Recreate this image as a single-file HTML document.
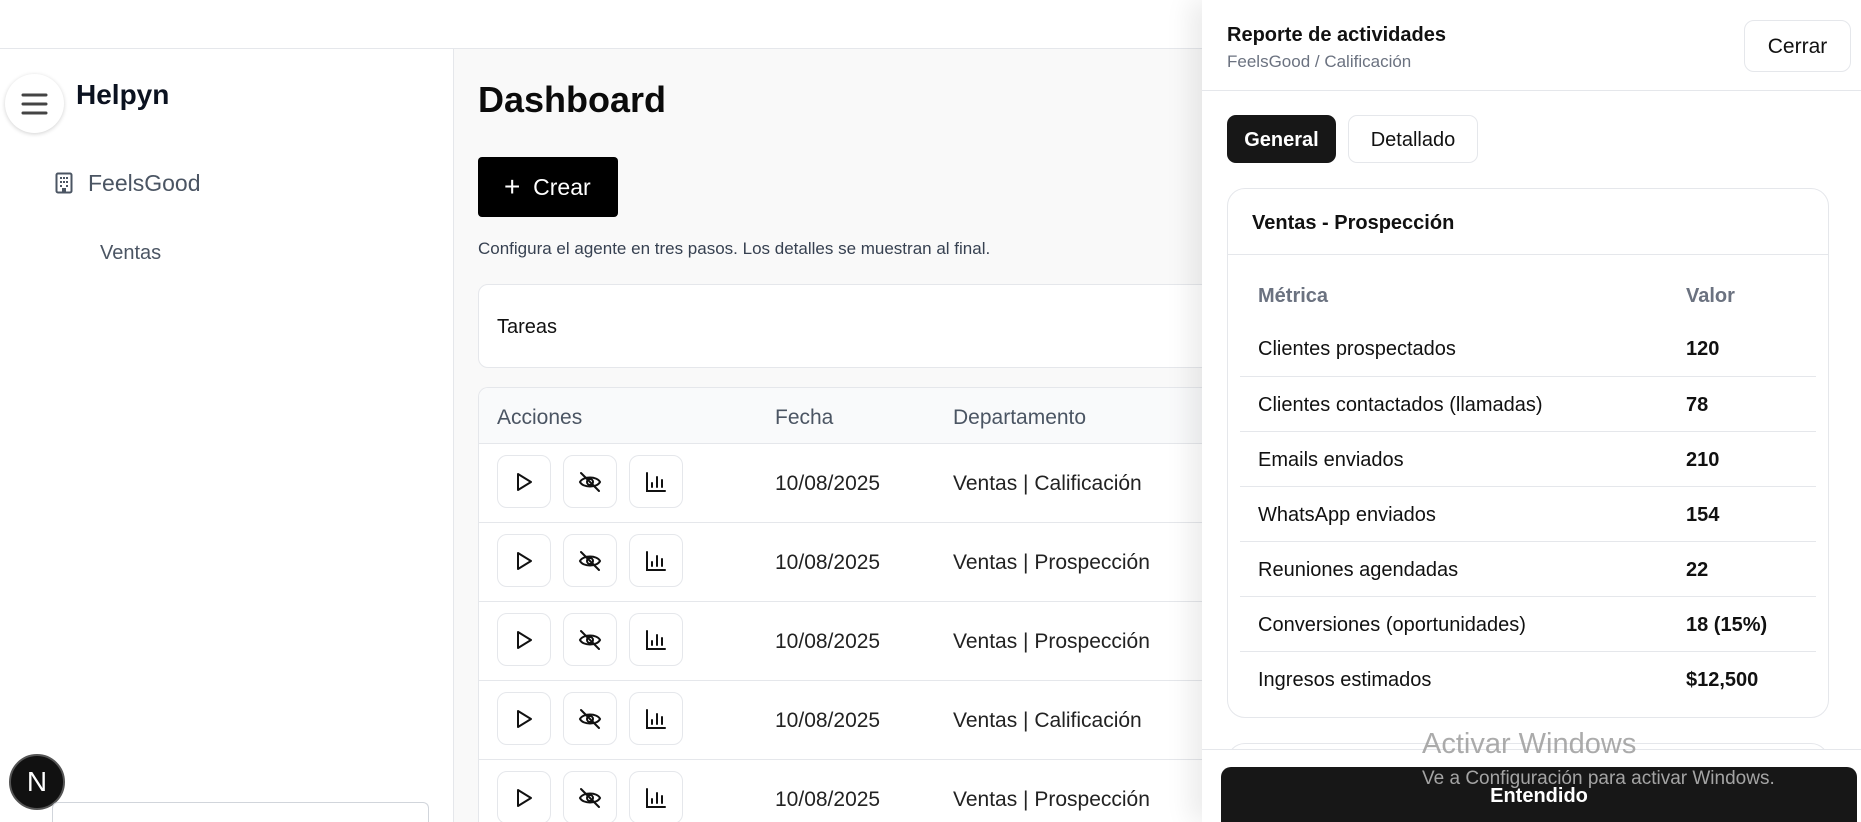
<!DOCTYPE html>
<html style="overflow:hidden;height:822px"><head><meta charset="utf-8"><style>
*{box-sizing:border-box;margin:0;padding:0}
body{width:1861px;height:822px;overflow:hidden;position:relative;background:#fff;font-family:"Liberation Sans",sans-serif;color:#111}
.abs{position:absolute}
.topbar{left:0;top:0;width:1861px;height:49px;border-bottom:1px solid #e5e7eb;background:#fff}
.side{left:0;top:49px;width:454px;height:773px;background:#fff;border-right:1px solid #e5e7eb}
.main{left:454px;top:49px;width:1407px;height:773px;background:#f9f9f9}
.ib{width:54px;height:53px;border:1px solid #e5e7eb;border-radius:10px;background:#fff;display:flex;align-items:center;justify-content:center}
.row{left:479px;width:800px;height:79px;border-top:1px solid #e5e7eb;background:#fff}
.mr{position:absolute;left:1240px;width:576px;height:55px;font-size:20px;color:#111}
.mr span{position:absolute;top:0;line-height:57px}
.t{font-size:21px;color:#222}
</style></head><body>
<div class="abs topbar"></div>
<div class="abs side"></div>
<div class="abs main"></div>

<div class="abs" style="left:5px;top:74px;width:59px;height:59px;border-radius:50%;background:#fff;box-shadow:0 1px 4px rgba(0,0,0,.18)"></div>
<svg class="abs" style="left:21px;top:92px" width="27" height="24"><g stroke="#444" stroke-width="3" stroke-linecap="round"><path d="M2 3H25M2 12H25M2 21H25"/></g></svg>
<div class="abs" style="left:76px;top:79px;font-size:28px;font-weight:bold;color:#0b1220">Helpyn</div>
<svg class="abs" style="left:55px;top:172px" width="18" height="22" viewBox="0 0 18 22"><rect x="1.5" y="1.5" width="15" height="19" rx="1.5" fill="none" stroke="#4b5563" stroke-width="2"/><g fill="#4b5563"><rect x="5" y="5" width="2" height="2"/><rect x="8" y="5" width="2" height="2"/><rect x="11" y="5" width="2" height="2"/><rect x="5" y="9" width="2" height="2"/><rect x="8" y="9" width="2" height="2"/><rect x="11" y="9" width="2" height="2"/><rect x="5" y="13" width="2" height="2"/><rect x="11" y="13" width="2" height="2"/><rect x="7" y="16" width="4" height="5"/></g></svg>
<div class="abs" style="left:88px;top:170px;font-size:23px;color:#4b5563">FeelsGood</div>
<div class="abs" style="left:100px;top:242px;font-size:20px;color:#4b5563">Ventas</div>
<div class="abs" style="left:9px;top:754px;width:56px;height:56px;border-radius:50%;background:#111;border:2px solid #555;color:#fff;font-size:28px;text-align:center;line-height:52px">N</div>
<div class="abs" style="left:52px;top:802px;width:377px;height:20px;border:1px solid #d1d5db;border-bottom:none;border-radius:6px 6px 0 0;background:#fff"></div>

<div class="abs" style="left:478px;top:79px;font-size:36px;font-weight:bold;color:#0b0b0b">Dashboard</div>
<div class="abs" style="left:478px;top:157px;width:140px;height:60px;background:#000;border-radius:4px;color:#fff;font-size:23px;line-height:60px;padding-left:26px"><span style="font-size:28px;vertical-align:-1px">+</span>&nbsp; Crear</div>
<div class="abs" style="left:478px;top:239px;font-size:17px;color:#374151">Configura el agente en tres pasos. Los detalles se muestran al final.</div>
<div class="abs" style="left:478px;top:284px;width:900px;height:84px;background:#fff;border:1px solid #e5e7eb;border-radius:10px"></div>
<div class="abs" style="left:497px;top:316px;font-size:20px;color:#111">Tareas</div>
<div class="abs" style="left:478px;top:387px;width:900px;height:435px;background:#fff;border:1px solid #e5e7eb;border-bottom:none;border-radius:10px 10px 0 0;overflow:hidden">
<div style="height:56px;background:#f9fafb"></div></div>
<div class="abs" style="left:497px;top:406px;font-size:21px;color:#4b5563">Acciones</div>
<div class="abs" style="left:775px;top:406px;font-size:21px;color:#4b5563">Fecha</div>
<div class="abs" style="left:953px;top:406px;font-size:21px;color:#4b5563">Departamento</div>

<div class="abs row" style="top:443px"></div><div class="abs row" style="top:522px"></div><div class="abs row" style="top:601px"></div><div class="abs row" style="top:680px"></div><div class="abs row" style="top:759px;height:63px"></div>

<div class="abs" style="left:497px;top:455px"><div style="display:flex;gap:12px"><div class="ib"><svg width="24" height="24" viewBox="0 0 24 24" fill="none" stroke="#111" stroke-width="2" stroke-linejoin="round"><path d="M6 4L19 12L6 20Z"/></svg></div><div class="ib"><svg width="24" height="24" viewBox="0 0 24 24" fill="none" stroke="#111" stroke-width="2" stroke-linecap="round"><path d="M2 12C5 6 19 6 22 12C19 18 5 18 2 12Z"/><circle cx="12" cy="12" r="3"/><path d="M3 3L21 21"/></svg></div><div class="ib"><svg width="24" height="24" viewBox="0 0 24 24" fill="none" stroke="#111" stroke-width="2" stroke-linecap="round"><path d="M3 3V21H21M8 17V13M13 17V7M18 17V10"/></svg></div></div></div>
<div class="abs" style="left:497px;top:534px"><div style="display:flex;gap:12px"><div class="ib"><svg width="24" height="24" viewBox="0 0 24 24" fill="none" stroke="#111" stroke-width="2" stroke-linejoin="round"><path d="M6 4L19 12L6 20Z"/></svg></div><div class="ib"><svg width="24" height="24" viewBox="0 0 24 24" fill="none" stroke="#111" stroke-width="2" stroke-linecap="round"><path d="M2 12C5 6 19 6 22 12C19 18 5 18 2 12Z"/><circle cx="12" cy="12" r="3"/><path d="M3 3L21 21"/></svg></div><div class="ib"><svg width="24" height="24" viewBox="0 0 24 24" fill="none" stroke="#111" stroke-width="2" stroke-linecap="round"><path d="M3 3V21H21M8 17V13M13 17V7M18 17V10"/></svg></div></div></div>
<div class="abs" style="left:497px;top:613px"><div style="display:flex;gap:12px"><div class="ib"><svg width="24" height="24" viewBox="0 0 24 24" fill="none" stroke="#111" stroke-width="2" stroke-linejoin="round"><path d="M6 4L19 12L6 20Z"/></svg></div><div class="ib"><svg width="24" height="24" viewBox="0 0 24 24" fill="none" stroke="#111" stroke-width="2" stroke-linecap="round"><path d="M2 12C5 6 19 6 22 12C19 18 5 18 2 12Z"/><circle cx="12" cy="12" r="3"/><path d="M3 3L21 21"/></svg></div><div class="ib"><svg width="24" height="24" viewBox="0 0 24 24" fill="none" stroke="#111" stroke-width="2" stroke-linecap="round"><path d="M3 3V21H21M8 17V13M13 17V7M18 17V10"/></svg></div></div></div>
<div class="abs" style="left:497px;top:692px"><div style="display:flex;gap:12px"><div class="ib"><svg width="24" height="24" viewBox="0 0 24 24" fill="none" stroke="#111" stroke-width="2" stroke-linejoin="round"><path d="M6 4L19 12L6 20Z"/></svg></div><div class="ib"><svg width="24" height="24" viewBox="0 0 24 24" fill="none" stroke="#111" stroke-width="2" stroke-linecap="round"><path d="M2 12C5 6 19 6 22 12C19 18 5 18 2 12Z"/><circle cx="12" cy="12" r="3"/><path d="M3 3L21 21"/></svg></div><div class="ib"><svg width="24" height="24" viewBox="0 0 24 24" fill="none" stroke="#111" stroke-width="2" stroke-linecap="round"><path d="M3 3V21H21M8 17V13M13 17V7M18 17V10"/></svg></div></div></div>
<div class="abs" style="left:497px;top:771px"><div style="display:flex;gap:12px"><div class="ib"><svg width="24" height="24" viewBox="0 0 24 24" fill="none" stroke="#111" stroke-width="2" stroke-linejoin="round"><path d="M6 4L19 12L6 20Z"/></svg></div><div class="ib"><svg width="24" height="24" viewBox="0 0 24 24" fill="none" stroke="#111" stroke-width="2" stroke-linecap="round"><path d="M2 12C5 6 19 6 22 12C19 18 5 18 2 12Z"/><circle cx="12" cy="12" r="3"/><path d="M3 3L21 21"/></svg></div><div class="ib"><svg width="24" height="24" viewBox="0 0 24 24" fill="none" stroke="#111" stroke-width="2" stroke-linecap="round"><path d="M3 3V21H21M8 17V13M13 17V7M18 17V10"/></svg></div></div></div>

<div class="abs t" style="left:775px;top:472px">10/08/2025</div><div class="abs t" style="left:953px;top:472px">Ventas | Calificación</div>
<div class="abs t" style="left:775px;top:551px">10/08/2025</div><div class="abs t" style="left:953px;top:551px">Ventas | Prospección</div>
<div class="abs t" style="left:775px;top:630px">10/08/2025</div><div class="abs t" style="left:953px;top:630px">Ventas | Prospección</div>
<div class="abs t" style="left:775px;top:709px">10/08/2025</div><div class="abs t" style="left:953px;top:709px">Ventas | Calificación</div>
<div class="abs t" style="left:775px;top:788px">10/08/2025</div><div class="abs t" style="left:953px;top:788px">Ventas | Prospección</div>

<!-- panel -->
<div class="abs" style="left:1202px;top:0;width:659px;height:822px;background:#fff;box-shadow:-12px 0 24px rgba(0,0,0,.08)"></div>
<div class="abs" style="left:1227px;top:24px;font-size:20px;font-weight:600;color:#111">Reporte de actividades</div>
<div class="abs" style="left:1227px;top:52px;font-size:17px;color:#6b7280">FeelsGood / Calificación</div>
<div class="abs" style="left:1744px;top:20px;width:107px;height:52px;border:1px solid #e5e7eb;border-radius:10px;font-size:21px;text-align:center;line-height:52px;color:#111">Cerrar</div>
<div class="abs" style="left:1202px;top:90px;width:659px;height:1px;background:#e5e7eb"></div>
<div class="abs" style="left:1227px;top:115px;width:109px;height:48px;background:#171717;border-radius:9px;color:#fff;font-size:20px;font-weight:bold;text-align:center;line-height:50px">General</div>
<div class="abs" style="left:1348px;top:115px;width:130px;height:48px;border:1px solid #e5e7eb;border-radius:9px;font-size:20px;text-align:center;line-height:48px;color:#111">Detallado</div>
<div class="abs" style="left:1227px;top:188px;width:602px;height:530px;border:1px solid #e5e7eb;border-radius:18px"></div>
<div class="abs" style="left:1227px;top:254px;width:602px;height:1px;background:#e5e7eb"></div>
<div class="abs" style="left:1252px;top:212px;font-size:20px;font-weight:600;color:#111">Ventas - Prospección</div>
<div class="abs" style="left:1258px;top:285px;font-size:20px;font-weight:bold;color:#6b7280">Métrica</div>
<div class="abs" style="left:1686px;top:285px;font-size:20px;font-weight:bold;color:#6b7280">Valor</div>
<div class="mr" style="top:321px"><span style="left:18px">Clientes prospectados</span><span style="left:446px;font-weight:600">120</span></div>
<div class="mr" style="top:376px;border-top:1px solid #e5e7eb"><span style="left:18px">Clientes contactados (llamadas)</span><span style="left:446px;font-weight:600">78</span></div>
<div class="mr" style="top:431px;border-top:1px solid #e5e7eb"><span style="left:18px">Emails enviados</span><span style="left:446px;font-weight:600">210</span></div>
<div class="mr" style="top:486px;border-top:1px solid #e5e7eb"><span style="left:18px">WhatsApp enviados</span><span style="left:446px;font-weight:600">154</span></div>
<div class="mr" style="top:541px;border-top:1px solid #e5e7eb"><span style="left:18px">Reuniones agendadas</span><span style="left:446px;font-weight:600">22</span></div>
<div class="mr" style="top:596px;border-top:1px solid #e5e7eb"><span style="left:18px">Conversiones (oportunidades)</span><span style="left:446px;font-weight:600">18 (15%)</span></div>
<div class="mr" style="top:651px;border-top:1px solid #e5e7eb"><span style="left:18px">Ingresos estimados</span><span style="left:446px;font-weight:600">$12,500</span></div>
<div class="abs" style="left:1227px;top:743px;width:602px;height:60px;border:1px solid #e5e7eb;border-radius:18px"></div>
<div class="abs" style="left:1202px;top:749px;width:659px;height:73px;background:#fff;border-top:1px solid #e5e7eb"></div>
<div class="abs" style="left:1221px;top:767px;width:636px;height:55px;background:#171717;border-radius:10px 10px 0 0;color:#fff;font-size:20px;font-weight:bold;text-align:center;line-height:58px">Entendido</div>
<div class="abs" style="left:1422px;top:728px;font-size:29px;color:rgba(150,150,150,.8)">Activar Windows</div>
<div class="abs" style="left:1422px;top:768px;font-size:19px;color:rgba(180,180,180,.9)">Ve a Configuración para activar Windows.</div>
</body></html>
